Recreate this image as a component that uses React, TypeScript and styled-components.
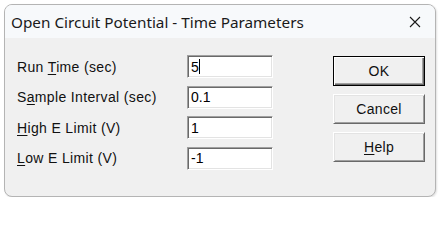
import React from 'react';
import styled, { createGlobalStyle } from 'styled-components';

const GlobalStyle = createGlobalStyle`
  html, body {
    margin: 0;
    padding: 0;
    background: #ffffff;
  }
`;

const Page = styled.div`
  padding: 4px 0 0 4px;
`;

const Window = styled.div`
  width: 432px;
  height: 193px;
  box-sizing: border-box;
  border: 1px solid #b4b4b4;
  border-radius: 8px;
  overflow: hidden;
  background: #f0f0f0;
  display: flex;
  flex-direction: column;
  box-shadow: 1px 1px 2px rgba(0, 0, 0, 0.12);
`;

const TitleBar = styled.div`
  height: 33px;
  flex: none;
  background: #f7f9fb;
  display: flex;
  align-items: center;
  justify-content: space-between;
  padding: 0 14px 0 6px;
`;

const Title = styled.span`
  font-family: 'Noto Sans', 'Open Sans', sans-serif;
  font-size: 15.3px;
  color: #1a1a1a;
`;

const CloseButton = styled.span`
  display: flex;
  align-items: center;
`;

const Body = styled.div`
  flex: 1;
  display: flex;
  justify-content: space-between;
  padding: 17px 10px 0 12px;
  font-family: 'Liberation Sans', Arial, sans-serif;
  font-size: 14px;
  color: #000;
`;

const Form = styled.div`
  display: grid;
  grid-template-columns: 170px 86px;
  grid-auto-rows: 23px;
  row-gap: 7.5px;
  align-items: center;
`;

const Label = styled.label`
  white-space: nowrap;
  letter-spacing: 0.35px;
  color: #111;
`;

const Key = styled.span`
  text-decoration: underline;
  text-underline-offset: 2px;
`;

const Field = styled.div`
  height: 23px;
  box-sizing: border-box;
  background: #fff;
  border: 1px solid;
  border-color: #a0a0a0 #ffffff #ffffff #a0a0a0;
  box-shadow: inset 1px 1px #696969, inset -1px -1px #e3e3e3;
  padding: 0 3px;
  display: flex;
  align-items: center;
`;

const Caret = styled.span`
  display: inline-block;
  width: 1px;
  height: 15px;
  background: #000;
`;

const Buttons = styled.div`
  display: flex;
  flex-direction: column;
  gap: 8px;
  padding-top: 1px;
`;

const Button = styled.button<{ $default?: boolean }>`
  width: 92px;
  height: 30px;
  box-sizing: border-box;
  background: #f0f0f0;
  font-family: 'Liberation Sans', Arial, sans-serif;
  font-size: 14px;
  letter-spacing: 0.3px;
  color: #111;
  padding: 0;
  border: 1px solid;
  border-color: ${({ $default }) =>
    $default ? '#000 #000 #000 #000' : '#ffffff #696969 #696969 #ffffff'};
  box-shadow: ${({ $default }) =>
    $default
      ? 'inset 1px 1px #ffffff, inset -1px -1px #696969, inset -2px -2px #a0a0a0'
      : 'inset 1px 1px #e3e3e3, inset -1px -1px #a0a0a0'};
`;

const rows: { label: React.ReactNode; value: string; caret?: boolean }[] = [
  { label: <>Run <Key>T</Key>ime (sec)</>, value: '5', caret: true },
  { label: <>S<Key>a</Key>mple Interval (sec)</>, value: '0.1' },
  { label: <><Key>H</Key>igh E Limit (V)</>, value: '1' },
  { label: <><Key>L</Key>ow E Limit (V)</>, value: '-1' },
];

export default function App() {
  return (
    <>
      <GlobalStyle />
      <Page>
        <Window>
          <TitleBar>
            <Title>Open Circuit Potential - Time Parameters</Title>
            <CloseButton>
              <svg width="12" height="12" viewBox="0 0 12 12">
                <path d="M1 1 L11 11 M11 1 L1 11" stroke="#1a1a1a" strokeWidth="1.1" fill="none" />
              </svg>
            </CloseButton>
          </TitleBar>
          <Body>
            <Form>
              {rows.map((r, i) => (
                <React.Fragment key={i}>
                  <Label>{r.label}</Label>
                  <Field>
                    {r.value}
                    {r.caret && <Caret />}
                  </Field>
                </React.Fragment>
              ))}
            </Form>
            <Buttons>
              <Button $default>OK</Button>
              <Button>Cancel</Button>
              <Button>
                <Key>H</Key>elp
              </Button>
            </Buttons>
          </Body>
        </Window>
      </Page>
    </>
  );
}
